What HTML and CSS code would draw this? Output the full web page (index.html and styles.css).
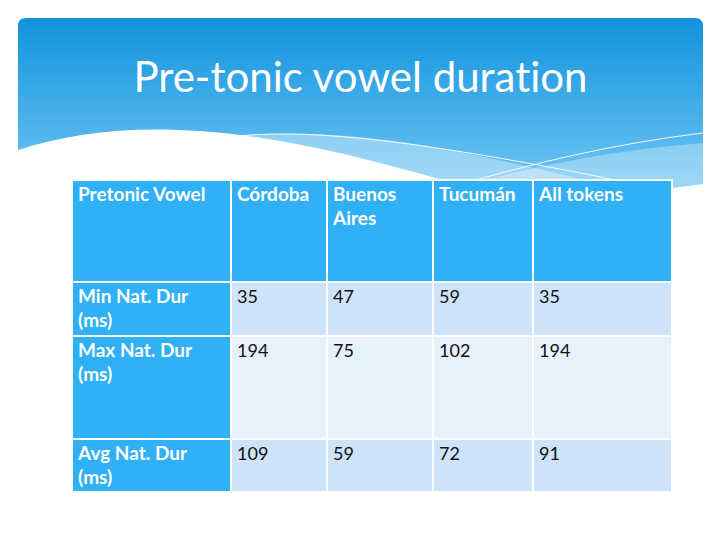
FILE: index.html
```html
<!DOCTYPE html>
<html>
<head>
<meta charset="utf-8">
<link rel="stylesheet" href="styles.css">
</head>
<body>
<div class="slide">
  <div class="header">
    <svg class="swoosh" width="685" height="178" viewBox="18 18 685 178" xmlns="http://www.w3.org/2000/svg">
      <defs>
        <linearGradient id="g" x1="0" y1="0" x2="0" y2="1">
          <stop offset="0" stop-color="#1293dd"/>
          <stop offset="0.7" stop-color="#56b8ee"/>
          <stop offset="1" stop-color="#7ac9f3"/>
        </linearGradient>
      </defs>
      <path d="M18,26 Q18,18 26,18 H695 Q703,18 703,26 V196 H18 Z" fill="url(#g)"/>
      <path d="M150,150 C230,128 330,130 420,145 C480,155 560,172 640,196 L150,196 Z" fill="#ffffff" fill-opacity="0.35"/>
      <path d="M430,196 C520,168 610,150 703,143 V196 Z" fill="#ffffff" fill-opacity="0.3"/>
      <path d="M18,150 C70,133 130,126 200,131 C300,138 400,168 500,196 H18 Z" fill="#ffffff"/>
      <path d="M600,196 C640,192 675,188 703,184 V196 Z" fill="#ffffff"/>
      <path d="M230,137 C300,128 400,140 527,163 S640,188 690,198" fill="none" stroke="#ffffff" stroke-width="1" stroke-opacity="0.9"/>
      <path d="M455,186 C540,161 620,143 703,133" fill="none" stroke="#ffffff" stroke-width="1" stroke-opacity="0.9"/>
    </svg>
    <h1 class="title">Pre-tonic vowel duration</h1>
  </div>
  <table class="data">
    <colgroup>
      <col class="c1"><col class="c2"><col class="c3"><col class="c4"><col class="c5">
    </colgroup>
    <tr class="head r0">
      <th>Pretonic Vowel</th><th>Córdoba</th><th>Buenos Aires</th><th>Tucumán</th><th>All tokens</th>
    </tr>
    <tr class="odd r1">
      <th>Min Nat. Dur (ms)</th><td>35</td><td>47</td><td>59</td><td>35</td>
    </tr>
    <tr class="even r2">
      <th>Max Nat. Dur (ms)</th><td>194</td><td>75</td><td>102</td><td>194</td>
    </tr>
    <tr class="odd r3">
      <th>Avg Nat. Dur (ms)</th><td>109</td><td>59</td><td>72</td><td>91</td>
    </tr>
  </table>
</div>
</body>
</html>
```

FILE: styles.css
```css
html, body {
  margin: 0;
  padding: 0;
  background: #ffffff;
}
body {
  width: 720px;
  height: 540px;
  overflow: hidden;
  font-family: Lato, "Open Sans", "Liberation Sans", sans-serif;
  font-variant-ligatures: none;
}
.slide {
  padding: 18px 0 0 18px;
}
.header {
  position: relative;
  width: 685px;
  height: 161px;
}
.swoosh {
  position: absolute;
  left: 0;
  top: 0;
}
.title {
  position: relative;
  margin: 0;
  padding-top: 34px;
  text-align: center;
  color: #ffffff;
  font-weight: 400;
  font-size: 42px;
  line-height: 48px;
  font-variant-ligatures: none;
}
.data {
  position: relative;
  margin-left: 53px;
  border-collapse: separate;
  border-spacing: 2px;
  background: #ffffff;
  table-layout: fixed;
  width: 602px;
}
.c1 { width: 157px; }
.c2 { width: 94px; }
.c3 { width: 104px; }
.c4 { width: 98px; }
.c5 { width: 137px; }
.data th, .data td {
  vertical-align: top;
  text-align: left;
  padding: 1px 5px 0 5px;
  line-height: 24px;
}
.data th {
  background: #30b0f6;
  color: #ffffff;
  font-weight: 700;
  font-size: 19px;
  padding-right: 10px;
}
.data td {
  color: #111111;
  font-weight: 400;
  font-size: 18px;
}
.odd td { background: #cde3fa; }
.even td { background: #e7f1fc; }
.r0 { height: 100px; }
.r1 { height: 52px; }
.r2 { height: 101px; }
.r3 { height: 51px; }
```
